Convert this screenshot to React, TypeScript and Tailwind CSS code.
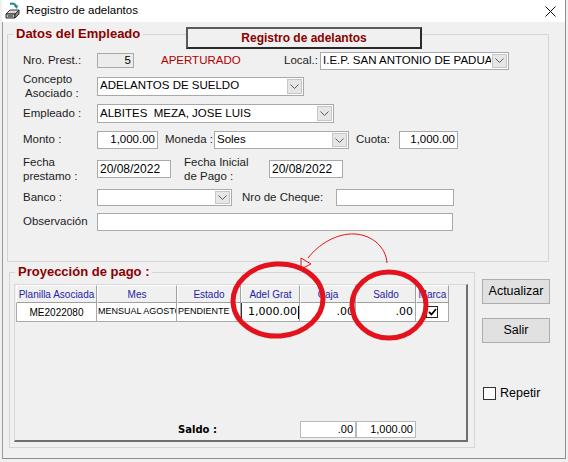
import React from "react";

function Chevron() {
  return (
    <svg width="9" height="5" viewBox="0 0 9 5" className="block">
      <path d="M0.5 0.5 L4.5 4.5 L8.5 0.5" fill="none" stroke="#5a5a5a" strokeWidth="1" />
    </svg>
  );
}

function Combo({ className, value }: { className: string; value?: string }) {
  return (
    <div className={`flex shrink-0 items-stretch border border-[#a9a9a9] bg-white ${className}`}>
      <div className="flex min-w-0 flex-1 items-center overflow-hidden whitespace-pre pl-[2px] text-[11.5px] text-black">
        {value}
      </div>
      <div className="m-[1px] flex w-[15px] items-center justify-center border border-[#c6c6c6] bg-[#e6e6e6]">
        <Chevron />
      </div>
    </div>
  );
}

function TextBox({ className, value, right }: { className: string; value?: string; right?: boolean }) {
  return (
    <div
      className={`flex shrink-0 items-center overflow-hidden whitespace-nowrap border border-[#a9a9a9] bg-white px-[2px] text-[11.5px] text-black ${
        right ? "justify-end" : "justify-start"
      } ${className}`}
    >
      {value}
    </div>
  );
}

function AppIcon() {
  return (
    <svg width="18" height="18" viewBox="0 0 18 18" className="ml-[2px] block shrink-0">
      <path d="M6 2 C9 1 12 2 12 5" fill="none" stroke="#1f8a8a" strokeWidth="2" />
      <path d="M10 4 L13 7 L14 3 Z" fill="#1f8a8a" />
      <path d="M2 12 L6 8 L15 8 L11 12 Z" fill="#d8d8d8" stroke="#3a3a3a" strokeWidth="1" />
      <path d="M2 12 L11 12 L11 16 L2 16 Z" fill="#bdbdbd" stroke="#2a2a2a" strokeWidth="1" />
      <path d="M11 12 L15 8 L15 12 L11 16 Z" fill="#8a8a8a" stroke="#2a2a2a" strokeWidth="1" />
      <path d="M4 14 L9 14" stroke="#222" strokeWidth="1" />
    </svg>
  );
}

const headers = ["Planilla Asociada", "Mes", "Estado", "Adel Grat", "Caja", "Saldo", "Marca"];

export default function App() {
  return (
    <div className="relative h-[462px] w-[568px] overflow-hidden bg-[#f0f0f0] font-['Liberation_Sans',Arial,sans-serif] text-[11.5px] text-[#1c1c1c]">
      <div className="ml-[2px] flex h-[459px] w-[564px] flex-col border-r border-b border-[#8c8c8c]">
        {/* Title bar */}
        <div className="flex h-[22px] shrink-0 items-center bg-white">
          <AppIcon />
          <span className="ml-[4px] text-[11.5px] text-black">Registro de adelantos</span>
          <svg width="11" height="11" viewBox="0 0 11 11" className="ml-auto mr-[9px] block">
            <path d="M0.5 0.5 L10.5 10.5 M10.5 0.5 L0.5 10.5" stroke="#111" strokeWidth="1" />
          </svg>
        </div>

        {/* Client area */}
        <div className="relative flex flex-1 flex-col border-l border-[#9a9a9a] bg-[#f0f0f0]">
          <fieldset className="ml-[4px] mt-[4px] h-[236px] w-[542px] shrink-0 border border-[#d5d5d5]">
            <legend className="ml-[5px] px-[3px] text-[13px] font-bold leading-[16px] text-[#8b0000]">
              Datos del Empleado
            </legend>
            <div className="flex flex-col whitespace-nowrap pl-[15px]">
              {/* Row 1 */}
              <div className="mt-[9px] flex h-[19px] items-center">
                <div className="w-[74px] shrink-0">Nro. Prest.:</div>
                <div className="flex h-[15px] w-[37px] shrink-0 items-center justify-end border border-[#a9a9a9] bg-[#ececec] pr-[2px] text-[11.5px] text-black">
                  5
                </div>
                <div className="ml-[27px] w-[123px] shrink-0 text-[11.5px] text-[#b00000]">APERTURADO</div>
                <div className="w-[36px] shrink-0">Local.:</div>
                <Combo className="h-[18px] w-[189px]" value="I.E.P. SAN ANTONIO DE PADUA IQUITOS" />
              </div>
              {/* Row 2 */}
              <div className="mt-[2px] flex h-[28px] items-center">
                <div className="w-[74px] shrink-0 leading-[14px]">
                  <div>Concepto</div>
                  <div className="pl-[2px]">Asociado :</div>
                </div>
                <Combo className="h-[19px] w-[207px]" value="ADELANTOS DE SUELDO" />
              </div>
              {/* Row 3 */}
              <div className="mt-[4px] flex h-[19px] items-center">
                <div className="w-[74px] shrink-0">Empleado :</div>
                <Combo className="h-[19px] w-[237px]" value="ALBITES  MEZA, JOSE LUIS" />
              </div>
              {/* Row 4 */}
              <div className="mt-[8px] flex h-[18px] items-center">
                <div className="w-[74px] shrink-0">Monto :</div>
                <TextBox className="h-[18px] w-[61px]" value="1,000.00" right />
                <div className="ml-[7px] w-[49px] shrink-0">Moneda :</div>
                <Combo className="h-[18px] w-[135px]" value="Soles" />
                <div className="ml-[7px] w-[43px] shrink-0">Cuota:</div>
                <TextBox className="h-[18px] w-[59px]" value="1,000.00" right />
              </div>
              {/* Row 5 */}
              <div className="mt-[6px] flex h-[28px] items-center">
                <div className="w-[74px] shrink-0 leading-[14px]">
                  <div>Fecha</div>
                  <div>prestamo :</div>
                </div>
                <TextBox className="h-[18px] w-[74px] text-[12px]" value="20/08/2022" />
                <div className="ml-[13px] w-[85px] shrink-0 leading-[14px]">
                  <div>Fecha Inicial</div>
                  <div>de Pago :</div>
                </div>
                <TextBox className="h-[18px] w-[74px] text-[12px]" value="20/08/2022" />
              </div>
              {/* Row 6 */}
              <div className="mt-[6px] flex h-[17px] items-center">
                <div className="w-[74px] shrink-0">Banco :</div>
                <Combo className="h-[17px] w-[135px]" value="" />
                <div className="ml-[10px] w-[94px] shrink-0">Nro de Cheque:</div>
                <TextBox className="h-[17px] w-[118px]" value="" />
              </div>
              {/* Row 7 */}
              <div className="mt-[7px] flex h-[18px] items-center">
                <div className="w-[74px] shrink-0">Observación</div>
                <TextBox className="h-[18px] w-[356px]" value="" />
              </div>
            </div>
          </fieldset>

          {/* Title box over the group frame */}
          <div className="absolute left-[183px] top-[5px] flex h-[22px] w-[236px] items-center justify-center border-2 border-t-[#5a5a5a] border-l-[#5a5a5a] border-r-[#2a2a2a] border-b-[#2a2a2a] bg-[#f0f0f0] text-[12px] font-bold text-[#8b0000]">
            Registro de adelantos
          </div>

          {/* Bottom section */}
          <div className="mt-[2px] flex">
            <fieldset className="ml-[6px] h-[184px] w-[466px] shrink-0 border border-[#d5d5d5]">
              <legend className="ml-[5px] px-[3px] text-[13px] font-bold leading-[16px] text-[#8b0000]">
                Proyección de pago :
              </legend>
              <div className="ml-[4px] mt-[4px] flex h-[158px] w-[454px] flex-col border-t border-l border-r-2 border-b-2 border-t-[#d8d8d8] border-l-[#d8d8d8] border-r-[#6e6e6e] border-b-[#6e6e6e]">
                <div className="ml-[1px] grid w-[433px] grid-cols-[81px_80px_64px_59px_56px_60px_33px]">
                  {headers.map((h) => (
                    <div
                      key={h}
                      className="flex h-[18px] items-center justify-center overflow-hidden whitespace-nowrap border border-t-white border-l-white border-r-[#a0a0a0] border-b-[#a0a0a0] bg-[#f0f0f0] text-[10px] text-[#2323a8]"
                    >
                      {h}
                    </div>
                  ))}
                  <div className="flex h-[19px] items-center justify-center border-r border-b border-l border-[#a9a9a9] bg-white text-[10px] text-black">
                    ME2022080
                  </div>
                  <div className="flex h-[19px] items-center overflow-hidden whitespace-nowrap border-r border-b border-[#a9a9a9] bg-white pl-[1px] text-[9px] text-black">
                    MENSUAL AGOSTO
                  </div>
                  <div className="flex h-[19px] items-center overflow-hidden whitespace-nowrap border-r border-b border-[#a9a9a9] bg-white pl-[1px] text-[9px] text-black">
                    PENDIENTE
                  </div>
                  <div className="flex h-[19px] items-center justify-end overflow-hidden whitespace-nowrap border-r border-b border-[#a9a9a9] bg-white font-['DejaVu_Sans',sans-serif] text-[11px] text-black shadow-[inset_1px_0_0_#333]">
                    1,000.00
                    <span className="ml-[1px] inline-block h-[13px] w-[1px] bg-black" />
                  </div>
                  <div className="flex h-[19px] items-center justify-end overflow-hidden whitespace-nowrap border-r border-b border-[#a9a9a9] bg-white pr-[1px] font-['DejaVu_Sans',sans-serif] text-[11px] text-black">
                    .00
                  </div>
                  <div className="flex h-[19px] items-center justify-end overflow-hidden whitespace-nowrap border-r border-b border-[#a9a9a9] bg-white pr-[2px] font-['DejaVu_Sans',sans-serif] text-[11px] text-black">
                    .00
                  </div>
                  <div className="flex h-[19px] items-center justify-center border-r border-b border-[#a9a9a9] bg-white">
                    <div className="flex h-[12px] w-[12px] items-center justify-center border border-[#222] bg-white">
                      <svg width="9" height="8" viewBox="0 0 9 8" className="block">
                        <path d="M1 4 L3.5 6.5 L8 1" fill="none" stroke="#000" strokeWidth="1.8" />
                      </svg>
                    </div>
                  </div>
                </div>
                <div className="mb-[2px] mt-auto flex h-[17px] items-center">
                  <div className="ml-[163px] w-[122px] shrink-0 font-['DejaVu_Sans',sans-serif] text-[10px] font-bold text-black">
                    Saldo :
                  </div>
                  <div className="flex h-[17px] w-[56px] shrink-0 items-center justify-end border border-[#b9b9b9] bg-white pr-[2px] text-[11px] text-black">
                    .00
                  </div>
                  <div className="flex h-[17px] w-[60px] shrink-0 items-center justify-end border border-[#b9b9b9] bg-white pr-[2px] text-[11px] text-black">
                    1,000.00
                  </div>
                </div>
              </div>
            </fieldset>

            <div className="ml-[7px] flex w-[68px] shrink-0 flex-col">
              <div className="mt-[15px] flex h-[25px] items-center justify-center border border-[#adadad] bg-[#e1e1e1] text-[12.5px] text-black">
                Actualizar
              </div>
              <div className="mt-[14px] flex h-[25px] items-center justify-center border border-[#adadad] bg-[#e1e1e1] text-[12.5px] text-black">
                Salir
              </div>
              <div className="mt-[43px] flex h-[14px] items-center">
                <div className="ml-[1px] h-[13px] w-[13px] shrink-0 border border-[#333] bg-white" />
                <span className="ml-[4px] text-[12.5px] text-black">Repetir</span>
              </div>
            </div>
          </div>
        </div>
      </div>

      {/* Red annotations drawn over the screenshot */}
      <svg className="pointer-events-none absolute left-0 top-0" width="568" height="462" viewBox="0 0 568 462">
        <ellipse cx="278" cy="300" rx="45" ry="36" fill="none" stroke="#e3121c" strokeWidth="5" transform="rotate(-4 278 300)" />
        <ellipse cx="389" cy="305" rx="37" ry="33" fill="none" stroke="#e3121c" strokeWidth="5" />
        <path d="M387 263 C386 247 372 235 355 234 C336 233 318 245 308 258" fill="none" stroke="#e3121c" strokeWidth="1" />
        <path d="M301 258 L301 269 L311 264 Z" fill="none" stroke="#e3121c" strokeWidth="1" />
      </svg>
    </div>
  );
}
